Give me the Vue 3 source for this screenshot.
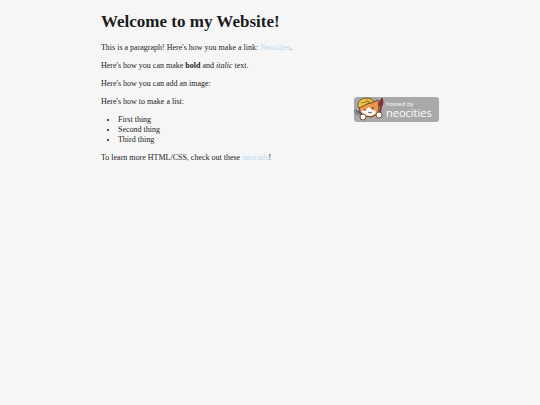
<template>
    <main class="page">
        <h1>Welcome to my Website!</h1>

        <p>This is a paragraph! Here's how you make a link: <a href="https://neocities.org">Neocities</a>.</p>

        <p>Here's how you can make <strong>bold</strong> and <em>italic</em> text.</p>

        <p>Here's how you can add an image:</p>

        <a class="badge" href="https://neocities.org" aria-label="hosted by neocities">
            <svg viewBox="0 0 85 25" aria-hidden="true">
                <rect width="85" height="25" rx="3" fill="#a9a9a9" />
                <!-- wrench -->
                <path d="M1 13l2 3 3-1M5 16l3 4" fill="none" stroke="#5d6870" stroke-width="3" />
                <path d="M1 14l2 2 5 4" fill="none" stroke="#aab7c0" stroke-width="1" />
                <!-- cat -->
                <path d="M5 9l1 6 4 4 7 1 5-2 3-5-1-10-4 2z" fill="#ee9650" stroke="#68432e" stroke-width="1" />
                <path d="M7 14l4-1 4-3 3 3 4 1-1 3-4 2-6-1z" fill="#fff" />
                <path d="M4 10C3 4 7 1 13 1c4 0 6 2 7 4l-7 2-8 4z" fill="#edc34e" stroke="#795524" stroke-width="1" />
                <path d="M7 6l9-2M12 2l3 4" fill="none" stroke="#a67c2c" stroke-width="1" />
                <path d="M11 12v2M19 10v2" stroke="#352b2b" stroke-width="1" />
                <path d="M14 15l2 1 2-1" fill="none" stroke="#754a3c" stroke-width="1" />
                <!-- brush -->
                <path d="M26 17l1-9" stroke="#783440" stroke-width="2" />
                <path d="M25 8l1-4 2-3 1 4-1 4z" fill="#922c35" stroke="#67333a" stroke-width="1" />
                <circle cx="9" cy="20" r="3" fill="#fff" stroke="#76533a" stroke-width="1" />
                <circle cx="25" cy="18" r="3" fill="#fff" stroke="#76533a" stroke-width="1" />
                <text class="hosted" x="32" y="9">hosted by</text>
                <text class="name" x="32" y="20">neocities</text>
            </svg>
        </a>

        <p>Here's how to make a list:</p>

        <ul>
            <li v-for="item in items" :key="item">{{ item }}</li>
        </ul>

        <p>To learn more HTML/CSS, check out these <a href="https://neocities.org/tutorials">tutorials</a>!</p>
    </main>
</template>

<script setup>
const items = ['First thing', 'Second thing', 'Third thing']
</script>

<style>
body{
    background: #f6f6f6;
}
</style>

<style scoped>
.page{
    width: 62.6%;
    margin: 0 auto;
    padding-top: 12px;
    color: #1b1c22;
    font-family: "Liberation Serif", "Times New Roman", serif;
    font-size: 8px;
    line-height: 10px;
}
h1{
    margin: 0 0 11px;
    font-size: 17px;
    line-height: 20px;
}
p{
    margin: 0 0 8px;
}
a{
    color: #b8daf4;
    text-decoration: none;
}
ul{
    margin: 0 0 8px;
    padding-left: 17px;
}
.badge{
    float: right;
    width: 85px;
    height: 25px;
}
.badge svg{
    display: block;
    width: 100%;
}
.badge text{
    fill: #fff;
    font-family: "Liberation Sans Narrow", "Open Sans", sans-serif;
}
.hosted{
    font-size: 6px;
}
.name{
    font-size: 11px;
}
</style>
